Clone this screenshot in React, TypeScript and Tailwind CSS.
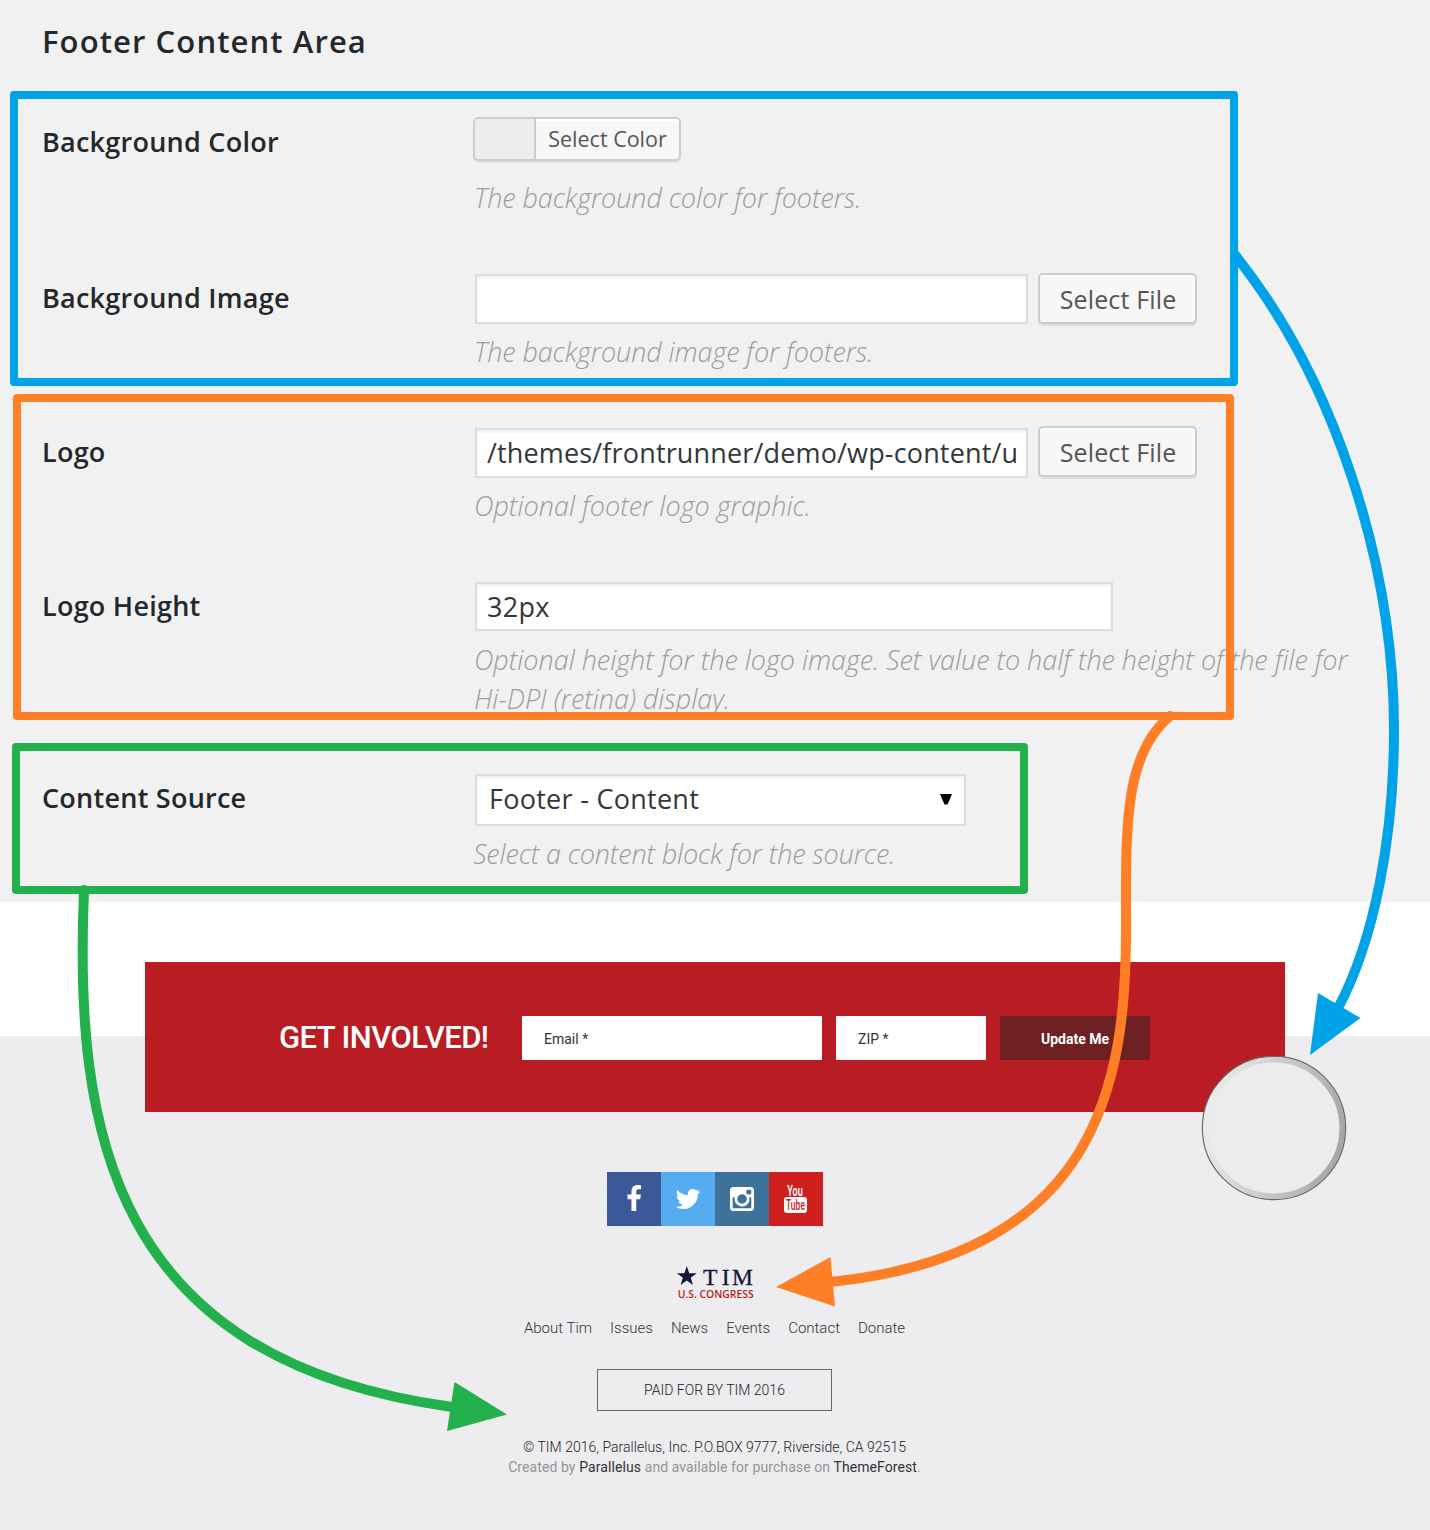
import type { ReactNode } from "react";

function Row({ label, className, labelTop, children }: { label: string; className: string; labelTop: string; children: ReactNode }) {
  return (
    <div className={`flex pl-[42px] ${className}`}>
      <div className={`w-[432px] shrink-0 text-[27px] leading-10 font-semibold tracking-[0.25px] whitespace-nowrap text-[#23282d] ${labelTop}`}>{label}</div>
      <div className="flex w-[890px] flex-col">{children}</div>
    </div>
  );
}

function Hint({ className, children }: { className: string; children: ReactNode }) {
  return <p className={`text-[27px] leading-[38.5px] font-light whitespace-nowrap text-[#9c9c9c] italic ${className}`}>{children}</p>;
}

function FileRow({ value, buttonTop }: { value: string; buttonTop: string }) {
  return (
    <div className="flex h-[52px] gap-[10px]">
      <div className="mt-px ml-px h-[50px] w-[553px] overflow-hidden border-2 border-[#ddd] bg-white px-[10px] shadow-[inset_0_2px_3px_rgba(0,0,0,0.07)]">
        <div className="overflow-hidden text-[27px] leading-[46px] tracking-[0.15px] whitespace-nowrap text-[#32373c]">{value}</div>
      </div>
      <button className={`h-[51px] w-[159px] rounded-[5px] border-2 border-[#ccc] bg-[#f7f7f7] pl-px text-[25px] leading-[46px] tracking-[0.15px] whitespace-nowrap text-[#555] shadow-[inset_0_2px_0_#fff,0_2px_0_rgba(0,0,0,0.08)] ${buttonTop}`}>
        Select File
      </button>
    </div>
  );
}

const socials = [
  { bg: "bg-[#3b5998]", d: "M1343 12v264h-157q-86 0-116 36t-30 108v189h293l-39 296h-254v759h-306v-759h-255v-296h255v-218q0-186 104-288.500t277-102.500q147 0 228 12z" },
  { bg: "bg-[#55acee]", d: "M1684 408q-67 98-162 167 1 14 1 42 0 130-38 259.500t-115.500 248.500-184.500 210.500-258 146-323 54.500q-271 0-496-145 35 4 78 4 225 0 401-138-105-2-188-64.500t-114-159.500q33 5 61 5 43 0 85-11-112-23-185.500-111.500t-73.500-205.500v-4q68 38 146 41-66-44-105-115t-39-154q0-88 44-163 121 149 294.500 238.500t371.500 99.500q-8-38-8-74 0-134 94.500-228.500t228.500-94.500q140 0 236 102 109-21 205-78-37 115-142 178 93-10 186-50z" },
  { bg: "bg-[#3f729b]", d: "M1490 1426v-648h-135q20 63 20 131 0 126-64 232.500t-174 168.500-240 62q-197 0-337-135.500t-140-327.500q0-68 20-131h-141v648q0 26 17.500 43.500t43.500 17.500h1069q25 0 43-17.500t18-43.500zm-284-533q0-124-90.500-211.500t-218.500-87.500q-127 0-217.500 87.500t-90.500 211.500 90.500 211.500 217.500 87.500q128 0 218.500-87.500t90.500-211.500zm284-360v-165q0-28-20-48.500t-49-20.500h-174q-29 0-49 20.500t-20 48.500v165q0 29 20 49t49 20h174q29 0 49-20t20-49zm174-208v1142q0 81-58 139t-139 58h-1142q-81 0-139-58t-58-139v-1142q0-81 58-139t139-58h1142q81 0 139 58t58 139z" },
];

function Settings() {
  return (
    <section className="h-[902px] overflow-hidden bg-[#f1f1f1] font-['Open_Sans',sans-serif]">
      <h2 className="h-[117px] pt-[18px] pl-[42px] text-[31px] leading-[46px] font-semibold tracking-[1.1px] text-[#23282d]">Footer Content Area</h2>
      <Row label="Background Color" className="h-[156px]" labelTop="mt-[5px]">
        <div className="-ml-px flex h-[44px] w-[208px] overflow-hidden rounded-[5px] border-2 border-[#ccc] bg-[#f7f7f7] shadow-[0_2px_0_rgba(0,0,0,0.06)]">
          <span className="w-[61px] border-r-2 border-[#ccc] bg-[#ededef]" />
          <span className="flex-1 text-center text-[21.5px] leading-[39px] whitespace-nowrap text-[#555] shadow-[inset_0_2px_0_#fff]">Select Color</span>
        </div>
        <Hint className="mt-[18px] tracking-[-0.09px]">The background color for footers.</Hint>
      </Row>
      <Row label="Background Image" className="h-[154px]" labelTop="mt-[5px]">
        <FileRow value="" buttonTop="" />
        <Hint className="mt-[8px] tracking-[-0.1px]">The background image for footers.</Hint>
      </Row>
      <Row label="Logo" className="h-[154px]" labelTop="mt-[5px]">
        <FileRow value="/themes/frontrunner/demo/wp-content/u" buttonTop="-mt-px" />
        <Hint className="mt-[8px]">Optional footer logo graphic.</Hint>
      </Row>
      <Row label="Logo Height" className="h-[192px]" labelTop="mt-[5px]">
        <div className="mt-px ml-px h-[49px] w-[638px] border-2 border-[#ddd] bg-white px-[10px] text-[27px] leading-[46px] tracking-[0.25px] text-[#32373c] shadow-[inset_0_2px_3px_rgba(0,0,0,0.07)]">32px</div>
        <Hint className="mt-[10px] tracking-[-0.04px]">
          Optional height for the logo image. Set value to half the height of the file for
          <br />
          Hi-DPI (retina) display.
        </Hint>
      </Row>
      <Row label="Content Source" className="h-[129px]" labelTop="mt-[5px]">
        <div className="mt-px ml-px flex h-[52px] w-[491px] items-center justify-between border-2 border-[#ddd] bg-white px-[12px] pb-[2px] text-[27px] leading-[46px] tracking-[0.27px] text-[#32373c] shadow-[inset_0_2px_3px_rgba(0,0,0,0.07)]">
          Footer - Content
          <svg width="12" height="11" viewBox="0 0 12 11"><path d="M0 0H12L7.500 10.500H4.500Z" fill="#000" /></svg>
        </div>
        <Hint className="mt-[9px] -ml-px tracking-[-0.16px]">Select a content block for the source.</Hint>
      </Row>
    </section>
  );
}

function Preview() {
  return (
    <section className="flex h-[628px] flex-col items-center bg-[linear-gradient(#fff_134px,#ededef_134px)] pt-[60px] font-['Roboto',sans-serif]">
      <div className="flex h-[150px] w-[1140px] shrink-0 items-start bg-[#b91d23] pt-[54px] pl-[134px] text-[14px] leading-[46px] text-[#333]">
        <h3 className="w-[243px] text-[31px] leading-[43px] font-medium tracking-[-0.55px] whitespace-nowrap text-white">GET INVOLVED!</h3>
        <div className="h-[44px] w-[300px] bg-white pl-[22px]">Email *</div>
        <div className="ml-[14px] h-[44px] w-[150px] bg-white pl-[22px]">ZIP *</div>
        <button className="ml-[14px] h-[44px] w-[150px] bg-[#6f2023] font-bold text-white">Update Me</button>
      </div>
      <div className="mt-[60px] flex h-[54px] shrink-0">
        {socials.map((s) => (
          <span key={s.bg} className={`flex h-[54px] w-[54px] items-center justify-center pr-px pb-px ${s.bg}`}>
            <svg width="28" height="28" viewBox="0 0 1792 1792" fill="#fff"><path d={s.d} /></svg>
          </span>
        ))}
        <span className="flex h-[54px] w-[54px] items-center justify-center bg-[#cd201f]">
          <svg width="54" height="54" viewBox="0 0 54 54" className="font-['Roboto',sans-serif]">
            <rect x="15" y="25" width="23" height="16" rx="3" fill="#fff" />
            <text x="18.300" y="24" fontSize="15.500" fontWeight="600" fill="#fff" textLength="15.500" lengthAdjust="spacingAndGlyphs">You</text>
            <text x="17" y="38.300" fontSize="15" fontWeight="500" fill="#cd201f" textLength="19" lengthAdjust="spacingAndGlyphs">Tube</text>
          </svg>
        </span>
      </div>
      <svg width="80" height="36" viewBox="0 0 80 36" className="mt-[38px] shrink-0 overflow-visible">
        <path d="M11.800 2L14.200 9.200H21.800L15.700 13.700L18 21L11.800 16.600L5.600 21L7.900 13.700L1.800 9.200H9.400Z" fill="#15163a" />
        <text x="28 46.800 57" y="21" fontSize="23.500" fill="#15163a" stroke="#15163a" strokeWidth="0.300" fontFamily="Liberation Serif, serif">TIM</text>
        <text x="2.700" y="33.700" fontSize="10.700" fontWeight="600" fill="#b91d23" fontFamily="Open Sans, sans-serif" textLength="76" lengthAdjust="spacingAndGlyphs">U.S. CONGRESS</text>
      </svg>
      <nav className="mt-[17px] mr-px flex h-[22px] gap-[18px] text-[15px] leading-[22px] font-light text-[#333]">
        {["About Tim", "Issues", "News", "Events", "Contact", "Donate"].map((t) => (
          <span key={t}>{t}</span>
        ))}
      </nav>
      <div className="mt-[30px] mr-px h-[42px] w-[235px] border border-[#666] text-center text-[14px] leading-[40px] font-light text-[#222]">PAID FOR BY TIM 2016</div>
      <p className="mt-[26px] mr-px text-[14px] leading-[20px] font-light tracking-[0.03px] text-[#222]">© TIM 2016, Parallelus, Inc. P.O.BOX 9777, Riverside, CA 92515</p>
      <p className="mr-px text-[14px] leading-[20px] tracking-[0.09px] text-[#949494]">
        Created by <span className="text-[#333]">Parallelus</span> and available for purchase on <span className="text-[#333]">ThemeForest</span>.
      </p>
    </section>
  );
}

function Annotations() {
  return (
    <div className="pointer-events-none absolute inset-0">
      <div className="absolute top-[91px] left-[10px] h-[295px] w-[1228px] rounded-[4px] border-8 border-[#00a2e8]" />
      <div className="absolute top-[394px] left-[13px] h-[326px] w-[1221px] rounded-[4px] border-8 border-[#ff7f27]" />
      <div className="absolute top-[743px] left-[12px] h-[151px] w-[1016px] rounded-[4px] border-8 border-[#22b14c]" />
      <svg width="1430" height="1530" viewBox="0 0 1430 1530" fill="none" strokeWidth="10" strokeLinecap="round" className="absolute inset-0">
        <defs>
          <linearGradient id="rim" x1="0" y1="0.400" x2="1" y2="0.600">
            <stop offset="0" stopColor="#ececec" />
            <stop offset="0.500" stopColor="#cbcbcb" />
            <stop offset="1" stopColor="#a6a6a6" />
          </linearGradient>
        </defs>
        <path d="M1235 255C1332 376 1394 560 1394 730C1394 835 1375 940 1337 1010" stroke="#00a2e8" />
        <path d="M1318 993L1360.500 1018L1310 1055Z" fill="#00a2e8" />
        <path d="M1170 716C1123 755 1126 830 1126 930C1126 1080 1100 1255 830 1282" stroke="#ff7f27" />
        <path d="M830.500 1257L835 1306.500L776 1287Z" fill="#ff7f27" />
        <path d="M84 890C74 1130 110 1360 452 1407" stroke="#22b14c" />
        <path d="M454.500 1382L447 1431L507 1414.500Z" fill="#22b14c" />
        <circle cx="1274" cy="1128" r="71.500" fill="#ececee" stroke="#6a6a6a" strokeWidth="1.500" />
        <circle cx="1274" cy="1128" r="68.200" stroke="url(#rim)" strokeWidth="5.500" />
      </svg>
    </div>
  );
}

export default function App() {
  return (
    <main className="relative h-[1530px] w-[1430px] overflow-hidden">
      <Settings />
      <Preview />
      <Annotations />
    </main>
  );
}
